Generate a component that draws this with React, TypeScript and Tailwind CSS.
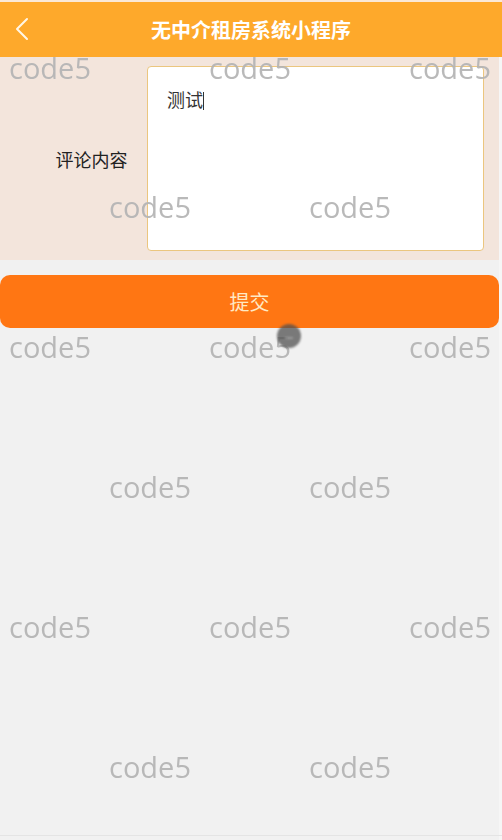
import React from "react";

const cjk = { fontFamily: '"Noto Sans CJK SC", "Noto Sans", sans-serif' };

export default function App() {
  const marks: { x: number; y: number }[] = [];
  const rows = [67, 206, 346, 486, 626, 766];
  rows.forEach((y, i) => {
    const xs = i % 2 === 0 ? [50, 250, 450] : [150, 350];
    xs.forEach((x) => marks.push({ x, y }));
  });

  return (
    <div className="relative w-[502px] h-[840px] overflow-hidden bg-[#f1f1f1]" style={cjk}>
      <div className="h-[2px] bg-[#fbe9d6]" />
      <header className="relative h-[55px] bg-[#fea92b] flex items-center justify-center">
        <svg className="absolute left-[14px] top-[15px]" width="16" height="24" viewBox="0 0 16 24" fill="none">
          <path d="M13 2 L3 12 L13 22" stroke="#fff6e6" strokeWidth="2" strokeLinecap="round" strokeLinejoin="round" />
        </svg>
        <h1 className="text-[20px] font-bold text-white leading-none">无中介租房系统小程序</h1>
      </header>

      <section className="bg-[#f3e5dc] h-[203px] flex items-start pt-[9px]">
        <div className="w-[147px] h-[185px] flex items-center justify-center pl-[36px]">
          <span className="text-[18px] text-[#222] leading-none">评论内容</span>
        </div>
        <div className="w-[337px] h-[185px] bg-white border border-[#ebc67f] rounded-[4px] px-[19px] pt-[21px]">
          <span className="text-[18px] text-[#333] leading-none">测试</span>
          <span className="inline-block w-[1px] h-[18px] bg-[#333] align-[-3px]" />
        </div>
      </section>

      <div className="h-[15px]" />

      <button className="w-[499px] h-[53px] bg-[#ff7613] rounded-[10px] flex items-center justify-center">
        <span className="text-[20px] text-[#ffe9c4] leading-none">提交</span>
      </button>

      <div className="absolute right-0 top-[57px] bottom-0 w-[3px] bg-[#f6f6f6]" />
      <div className="absolute left-0 right-0 bottom-[4px] h-[1px] bg-[#e4e4e4]" />

      {marks.map((m, i) => (
        <span
          key={i}
          className="absolute text-[29px] text-[#b4b4b4] leading-none pointer-events-none -translate-x-1/2 -translate-y-1/2"
          style={{ left: m.x, top: m.y, fontFamily: '"Open Sans", "Noto Sans", sans-serif', opacity: 0.92 }}
        >
          code5
        </span>
      ))}

      <div className="absolute left-[277px] top-[324px] w-[24px] h-[24px] rounded-full bg-[#505050]/75 blur-[1px] flex items-center justify-center">
        <div className="w-[8px] h-[2px] bg-[#9a9a9a] mt-[3px]" />
      </div>
    </div>
  );
}
